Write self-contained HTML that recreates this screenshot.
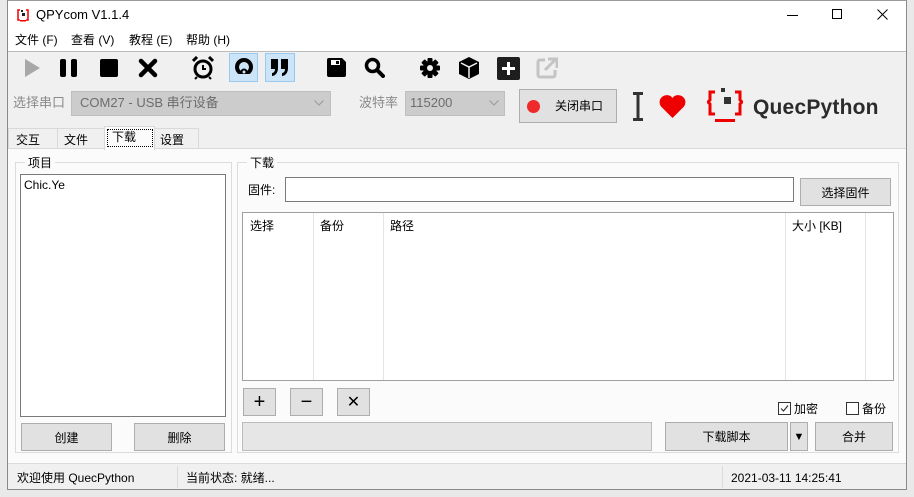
<!DOCTYPE html>
<html><head><meta charset="utf-8">
<style>
*{margin:0;padding:0;box-sizing:border-box}
body{width:914px;height:497px;background:#e9e9e9;position:relative;overflow:hidden;font-family:"Liberation Sans","Noto Sans CJK SC",sans-serif;font-size:12px;color:#000}
.a{position:absolute}
.t{position:absolute;white-space:nowrap;line-height:14px}
.btn{position:absolute;background:#e1e1e1;border:1px solid #adadad;display:flex;align-items:center;justify-content:center;font-size:12px}
.gl{position:absolute;border:1px solid #dcdcdc}
svg{position:absolute}
</style></head><body>
<div class="a" style="left:7px;top:0;width:900px;height:490px;background:#f0f0f0;border:1px solid #8a8a8a;border-top-color:#9a9a9a"></div>
<!-- title -->
<div class="a" style="left:8px;top:1px;width:898px;height:50px;background:#fff"></div>
<svg style="left:16px;top:8px" width="14" height="14" viewBox="0 0 14 14"><path d="M4 2H2v10h2M10 2h2v10h-2" stroke="#e00" stroke-width="1.5" fill="none"/><rect x="6" y="5" width="3" height="3" fill="#222"/><rect x="5" y="2" width="2" height="2" fill="#222"/><rect x="4" y="12" width="6" height="1.5" fill="#e00"/></svg>
<div class="t" style="left:36px;top:8px;font-size:13px">QPYcom V1.1.4</div>
<div class="a" style="left:787px;top:15px;width:11px;height:1px;background:#000"></div>
<div class="a" style="left:832px;top:9px;width:10px;height:10px;border:1px solid #000"></div>
<svg style="left:877px;top:9px" width="11" height="11"><path d="M0.5 0.5L10.5 10.5M10.5 0.5L0.5 10.5" stroke="#000" stroke-width="1"/></svg>
<div class="t" style="left:15px;top:33px">文件 (F)</div>
<div class="t" style="left:71px;top:33px">查看 (V)</div>
<div class="t" style="left:129px;top:33px">教程 (E)</div>
<div class="t" style="left:186px;top:33px">帮助 (H)</div>
<div class="a" style="left:8px;top:51px;width:898px;height:1px;background:#bcbcbc"></div>
<!-- toolbar -->
<svg style="left:22px;top:58px" width="20" height="20"><path d="M3 1L18 10L3 19Z" fill="#a8a8a8"/></svg>
<svg style="left:58px;top:58px" width="22" height="20"><rect x="2" y="1" width="6" height="18" rx="2" fill="#000"/><rect x="13" y="1" width="6" height="18" rx="2" fill="#000"/></svg>
<svg style="left:99px;top:58px" width="20" height="20"><rect x="1" y="1" width="18" height="18" rx="2" fill="#000"/></svg>
<svg style="left:138px;top:58px" width="20" height="20"><path d="M3 3L17 17M17 3L3 17" stroke="#000" stroke-width="4.5" stroke-linecap="round"/></svg>
<svg style="left:192px;top:56px" width="22" height="24" viewBox="0 0 22 24"><circle cx="11" cy="13" r="8" fill="none" stroke="#000" stroke-width="3"/><path d="M11 9v4h3" stroke="#000" stroke-width="2" fill="none"/><path d="M1 5L5 1M21 5L17 1" stroke="#000" stroke-width="3"/><path d="M5 21L3 23M17 21L19 23" stroke="#000" stroke-width="2"/></svg>
<div class="a" style="left:229px;top:53px;width:29px;height:29px;background:#cce4f7;border:1px solid #99c9ef"></div>
<svg style="left:234px;top:57px" width="20" height="20"><circle cx="10" cy="10" r="9" fill="#000"/><circle cx="10" cy="10" r="5" fill="#cce4f7"/><circle cx="10" cy="15" r="3.5" fill="#000"/><circle cx="10" cy="15" r="1.5" fill="#cce4f7"/><rect x="4" y="17" width="12" height="3" fill="#cce4f7"/></svg>
<div class="a" style="left:265px;top:53px;width:30px;height:29px;background:#cce4f7;border:1px solid #99c9ef"></div>
<svg style="left:270px;top:58px" width="20" height="20"><path d="M1 1h7v9c0 5-3 8-6 8l0-3c2 0 3-2 3-4H1z M11 1h7v9c0 5-3 8-6 8l0-3c2 0 3-2 3-4H11z" fill="#000"/></svg>
<svg style="left:326px;top:57px" width="21" height="21"><path d="M1 3a2 2 0 0 1 2-2h13l4 4v13a2 2 0 0 1-2 2H3a2 2 0 0 1-2-2z" fill="#000"/><rect x="5" y="3" width="9" height="5" fill="#fff"/><rect x="10" y="4" width="3" height="3" fill="#000"/></svg>
<svg style="left:364px;top:57px" width="21" height="21"><circle cx="8.5" cy="8.5" r="6" fill="none" stroke="#000" stroke-width="3.5"/><path d="M13 13L19 19" stroke="#000" stroke-width="4" stroke-linecap="round"/></svg>
<svg style="left:419px;top:57px" width="22" height="22" viewBox="0 0 22 22"><g fill="#000"><circle cx="11" cy="11" r="7"/><rect x="8.5" y="1" width="5" height="20" rx="1"/><rect x="8.5" y="1" width="5" height="20" rx="1" transform="rotate(45 11 11)"/><rect x="8.5" y="1" width="5" height="20" rx="1" transform="rotate(90 11 11)"/><rect x="8.5" y="1" width="5" height="20" rx="1" transform="rotate(135 11 11)"/></g><circle cx="11" cy="11" r="3" fill="#f0f0f0"/></svg>
<svg style="left:458px;top:56px" width="22" height="24" viewBox="0 0 22 24"><path d="M11 1L21 6V18L11 23L1 18V6Z" fill="#000"/><path d="M3 7L11 11L19 7" stroke="#f0f0f0" stroke-width="1.5" fill="none"/><path d="M11 11V22" stroke="#f0f0f0" stroke-width="1.5"/></svg>
<svg style="left:497px;top:57px" width="23" height="23"><rect x="0" y="0" width="23" height="23" rx="2" fill="#1e1e1e"/><path d="M11.5 5v13M5 11.5h13" stroke="#fff" stroke-width="3"/></svg>
<svg style="left:536px;top:57px" width="22" height="22"><path d="M9 3H4a2 2 0 0 0-2 2v13a2 2 0 0 0 2 2h13a2 2 0 0 0 2-2v-5" stroke="#c4c4c4" stroke-width="3" fill="none"/><path d="M9 13L19 3M12 2h9v9" stroke="#c4c4c4" stroke-width="3" fill="none"/></svg>
<!-- port row -->
<div class="t" style="left:13px;top:96px;color:#8a8a8a;font-size:13px">选择串口</div>
<div class="a" style="left:71px;top:91px;width:260px;height:25px;background:#cccccc;border:1px solid #bfbfbf"></div>
<div class="t" style="left:80px;top:96px;color:#6d6d6d;font-size:13px">COM27 - USB 串行设备</div>
<svg style="left:314px;top:100px" width="10" height="6"><path d="M0.5 0.5L5 5L9.5 0.5" stroke="#9a9a9a" fill="none"/></svg>
<div class="t" style="left:359px;top:96px;color:#8a8a8a;font-size:13px">波特率</div>
<div class="a" style="left:405px;top:91px;width:100px;height:25px;background:#cccccc;border:1px solid #bfbfbf"></div>
<div class="t" style="left:410px;top:96px;color:#6d6d6d;font-size:13px">115200</div>
<svg style="left:489px;top:100px" width="10" height="6"><path d="M0.5 0.5L5 5L9.5 0.5" stroke="#9a9a9a" fill="none"/></svg>
<div class="btn" style="left:519px;top:89px;width:98px;height:34px;justify-content:flex-start"><span class="a" style="left:7px;top:10px;width:13px;height:13px;border-radius:50%;background:#ee2a2a"></span><span class="t" style="left:35px;top:9px">关闭串口</span></div>
<svg style="left:632px;top:92px" width="12" height="29"><path d="M6 1V28M1 1.5h10M1 27.5h10" stroke="#333" stroke-width="3"/></svg>
<svg style="left:659px;top:95px" width="27" height="23" viewBox="0 0 27 23"><path d="M13.5 23L2 11.5A6.5 6.5 0 0 1 13.5 3A6.5 6.5 0 0 1 25 11.5Z" fill="#ee0000"/></svg>
<svg style="left:707px;top:87px" width="36" height="38" viewBox="0 0 36 38"><path d="M8 5H3v8l-2 2l2 2v10h5M28 5h5v8l2 2l-2 2v10h-5" stroke="#ee0000" stroke-width="3" fill="none"/><rect x="14" y="1" width="4" height="4" fill="#333"/><rect x="17" y="10" width="7" height="7" fill="#333"/><rect x="8" y="32" width="20" height="3" fill="#ee0000"/></svg>
<div class="t" style="left:753px;top:96px;font-size:21px;line-height:24px;color:#2b2b2b;font-weight:bold;letter-spacing:0.2px">QuecPython</div>
<!-- tabs -->
<div class="a" style="left:8px;top:148px;width:898px;height:341px;background:#fbfbfb;border-top:1px solid #d9d9d9"></div>
<div class="a" style="left:8px;top:128px;width:50px;height:21px;background:#f0f0f0;border:1px solid #d9d9d9"></div>
<div class="t" style="left:16px;top:133px">交互</div>
<div class="a" style="left:57px;top:128px;width:48px;height:21px;background:#f0f0f0;border:1px solid #d9d9d9"></div>
<div class="t" style="left:64px;top:133px">文件</div>
<div class="a" style="left:154px;top:128px;width:45px;height:21px;background:#f0f0f0;border:1px solid #d9d9d9"></div>
<div class="t" style="left:160px;top:133px">设置</div>
<div class="a" style="left:104px;top:126px;width:51px;height:24px;background:#fbfbfb;border:1px solid #d9d9d9;border-bottom:none"></div>
<div class="a" style="left:107px;top:129px;width:46px;height:18px;border:1px dotted #000"></div>
<div class="t" style="left:112px;top:130px">下载</div>
<!-- left group -->
<div class="gl" style="left:15px;top:162px;width:217px;height:291px"></div>
<div class="t" style="left:25px;top:156px;background:#fbfbfb;padding:0 3px">项目</div>
<div class="a" style="left:20px;top:174px;width:206px;height:243px;background:#fff;border:1px solid #7a7a7a"></div>
<div class="t" style="left:24px;top:178px">Chic.Ye</div>
<div class="btn" style="left:21px;top:423px;width:91px;height:28px">创建</div>
<div class="btn" style="left:134px;top:423px;width:91px;height:28px">删除</div>
<!-- right group -->
<div class="gl" style="left:237px;top:162px;width:662px;height:291px"></div>
<div class="t" style="left:247px;top:156px;background:#fbfbfb;padding:0 3px">下载</div>
<div class="t" style="left:248px;top:183px">固件:</div>
<div class="a" style="left:285px;top:177px;width:509px;height:25px;background:#fff;border:1px solid #7a7a7a"></div>
<div class="btn" style="left:800px;top:178px;width:91px;height:28px">选择固件</div>
<div class="a" style="left:242px;top:212px;width:652px;height:169px;background:#fff;border:1px solid #a0a0a0"></div>
<div class="a" style="left:313px;top:213px;width:1px;height:167px;background:#e5e5e5"></div>
<div class="a" style="left:383px;top:213px;width:1px;height:167px;background:#e5e5e5"></div>
<div class="a" style="left:785px;top:213px;width:1px;height:167px;background:#e5e5e5"></div>
<div class="a" style="left:865px;top:213px;width:1px;height:167px;background:#e5e5e5"></div>
<div class="t" style="left:250px;top:219px">选择</div>
<div class="t" style="left:320px;top:219px">备份</div>
<div class="t" style="left:390px;top:219px">路径</div>
<div class="t" style="left:792px;top:219px">大小 [KB]</div>
<div class="btn" style="left:243px;top:388px;width:33px;height:28px;font-size:20px">+</div>
<div class="btn" style="left:290px;top:388px;width:33px;height:28px;font-size:20px">−</div>
<div class="btn" style="left:337px;top:388px;width:33px;height:28px;font-size:16px">✕</div>
<div class="a" style="left:778px;top:402px;width:13px;height:13px;background:#fff;border:1px solid #333"></div>
<svg style="left:779px;top:403px" width="11" height="11"><path d="M2 5.5L4.5 8L9 2.5" stroke="#333" stroke-width="1.2" fill="none"/></svg>
<div class="t" style="left:794px;top:402px">加密</div>
<div class="a" style="left:846px;top:402px;width:13px;height:13px;background:#fff;border:1px solid #333"></div>
<div class="t" style="left:862px;top:402px">备份</div>
<div class="a" style="left:242px;top:422px;width:410px;height:29px;background:#e6e6e6;border:1px solid #bcbcbc"></div>
<div class="btn" style="left:665px;top:422px;width:123px;height:29px">下载脚本</div>
<div class="btn" style="left:790px;top:422px;width:18px;height:29px;font-size:11px">▼</div>
<div class="btn" style="left:815px;top:422px;width:78px;height:29px">合并</div>
<!-- status -->
<div class="a" style="left:8px;top:463px;width:898px;height:26px;background:#f0f0f0;border-top:1px solid #dadada"></div>
<div class="a" style="left:177px;top:466px;width:1px;height:22px;background:#dadada"></div>
<div class="a" style="left:722px;top:466px;width:1px;height:22px;background:#dadada"></div>
<div class="t" style="left:17px;top:471px">欢迎使用 QuecPython</div>
<div class="t" style="left:186px;top:471px">当前状态: 就绪...</div>
<div class="t" style="left:731px;top:471px">2021-03-11 14:25:41</div>
</body></html>
